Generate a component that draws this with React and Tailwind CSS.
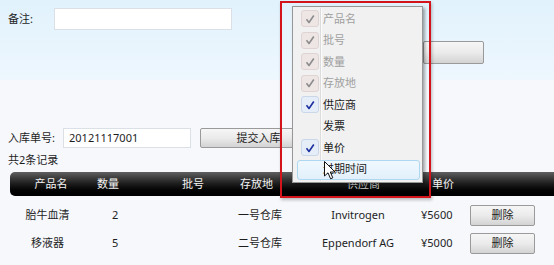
import React from 'react';

const menuItems = [
  { label: '产品名', checked: true, disabled: true },
  { label: '批号', checked: true, disabled: true },
  { label: '数量', checked: true, disabled: true },
  { label: '存放地', checked: true, disabled: true },
  { label: '供应商', checked: true },
  { label: '发票' },
  { label: '单价', checked: true },
  { label: '过期时间', hover: true },
];

const rows = [
  { name: '胎牛血清', qty: '2', place: '一号仓库', vendor: 'Invitrogen', price: '¥5600' },
  { name: '移液器', qty: '5', place: '二号仓库', vendor: 'Eppendorf AG', price: '¥5000' },
];

const Check = ({ color }) => (
  <svg width="12" height="12" viewBox="0 0 12 12" fill="none">
    <path d="M2.5 6.2 L5 9.5 L9.8 2.5" stroke={color} strokeWidth="1.6" strokeLinejoin="round" />
  </svg>
);

const GrayButton = ({ className, children }) => (
  <div
    className={`flex items-center justify-center rounded-[2px] border border-[#9a9a9a] bg-gradient-to-b from-[#f6f6f6] via-[#ebebeb] to-[#d3d3d3] text-[#222] ${className}`}
  >
    {children}
  </div>
);

// 列设置菜单，浮在表格上面
const ColumnMenu = () => (
  <div className="absolute left-[292px] top-[6px] w-[131px] h-[177px] border border-[#979797] bg-[#f1f1f1] shadow-[2px_2px_3px_rgba(0,0,0,0.35)] pt-[1px]">
    <div className="absolute left-[27px] top-[1px] bottom-[1px] w-[2px] border-l border-[#dcdcdc] bg-white/70" />
    {menuItems.map((item) => (
      <div key={item.label} className="relative flex items-center h-[21.5px]">
        {item.hover && (
          <div className="absolute left-[4px] right-[2px] top-[1px] bottom-[0px] rounded-[3px] border border-[#aed7f2] bg-gradient-to-b from-[#f0f8fe] to-[#e2f0fb]" />
        )}
        <div className="relative w-[30px] flex justify-center pl-[3px]">
          {item.checked && (
            <div
              className={`w-[18px] h-[17px] rounded-[3px] border flex items-center justify-center ${
                item.disabled ? 'border-[#e0d3d3] bg-[#eee5e5]' : 'border-[#c9d7e9] bg-[#e5edf8]'
              }`}
            >
              <Check color={item.disabled ? '#8c8c8c' : '#1c2fa0'} />
            </div>
          )}
        </div>
        <span className={`relative ${item.disabled ? 'text-[#a0a0a0]' : 'text-[#1a1a1a]'}`}>{item.label}</span>
        {item.hover && (
          <svg className="absolute left-[31px] top-[2px]" width="12" height="19" viewBox="0 0 12 19">
            <path d="M0.5 0.5 L0.5 15 L4 11.8 L6.6 17.8 L8.8 16.8 L6.3 11 L11 11 Z" fill="#fff" stroke="#111" strokeWidth="1" strokeLinejoin="round" />
          </svg>
        )}
      </div>
    ))}
  </div>
);

export default function App() {
  return (
    <div className="relative w-[554px] h-[265px] overflow-hidden bg-[#f6f8fc] text-[11px] leading-[14px] text-[#1e1e1e] font-['Noto_Sans','Noto_Sans_CJK_SC',sans-serif]">
      {/* 备注 */}
      <div className="h-[80px] bg-gradient-to-b from-[#e1f2fc] to-[#eef7fe] pt-[8px]">
        <div className="flex items-center">
          <span className="ml-[8px] w-[46px]">备注:</span>
          <div className="w-[178px] h-[22px] bg-white border border-[#dbe0e6]" />
        </div>
        <GrayButton className="ml-[423px] mt-[11px] w-[61px] h-[23px]" />
      </div>

      <div className="pl-[8px]">
        <div className="mt-[48px] flex items-center h-[20px]">
          <span className="w-[55px]">入库单号:</span>
          <div className="w-[128px] h-[20px] bg-white border border-[#dbe0e6] pl-[5px] flex items-center">20121117001</div>
          <GrayButton className="ml-[9px] w-[117px] h-[20px]">提交入库</GrayButton>
        </div>
        <div className="mt-[5px]">共2条记录</div>

        {/* 表头 */}
        <div className="mt-[5px] ml-[2px] h-[24px] rounded-l-[5px] bg-gradient-to-b from-[#606060] via-[#1c1c1c] to-[#000] text-[#f4f4f4] flex items-center">
          <div className="w-[82px] text-center">产品名</div>
          <div className="w-[90px] pl-[5px]">数量</div>
          <div className="w-[58px]">批号</div>
          <div className="w-[107px]">存放地</div>
          <div className="w-[85px] text-[#cfcfcf]">供应商</div>
          <div>单价</div>
        </div>

        <div className="mt-[5px] ml-[2px]">
          {rows.map((r) => (
            <div key={r.name} className="flex items-center h-[28px]">
              <div className="w-[75px] text-center">{r.name}</div>
              <div className="w-[153px] pl-[27px]">{r.qty}</div>
              <div className="w-[84px]">{r.place}</div>
              <div className="w-[72px] text-center whitespace-nowrap">{r.vendor}</div>
              <div className="w-[76px] pl-[27px]">{r.price}</div>
              <GrayButton className="w-[65px] h-[21px]">删除</GrayButton>
            </div>
          ))}
        </div>
      </div>

      <ColumnMenu />

      {/* 红框标注 */}
      <div className="absolute left-[280px] top-[1px] w-[151px] h-[197px] border-2 border-[#d3141b] shadow-[1px_2px_3px_rgba(0,0,0,0.25)]" />
    </div>
  );
}
